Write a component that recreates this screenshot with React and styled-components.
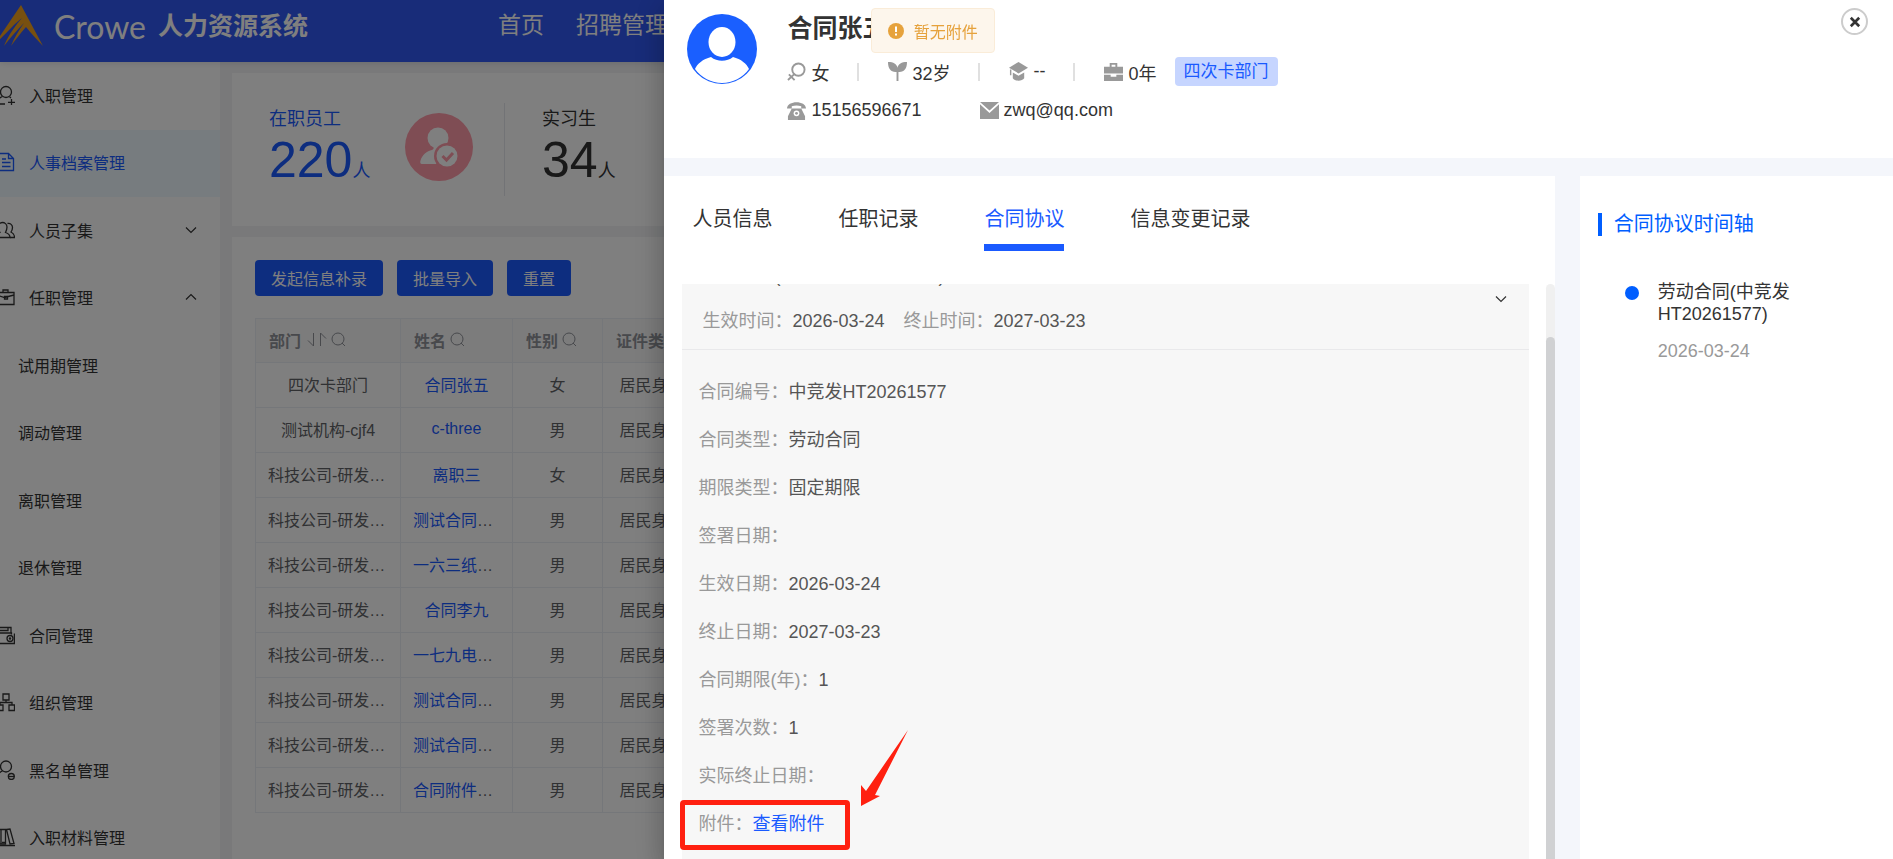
import React, { useState } from "react"
import styled, { createGlobalStyle } from "styled-components"

const menus = [
  { name: "入职管理", icon: "userAdd" },
  { name: "人事档案管理", icon: "file", active: true },
  { name: "人员子集", icon: "users", arrow: "down" },
  { name: "任职管理", icon: "bag", arrow: "up" },
  { name: "试用期管理", sub: true },
  { name: "调动管理", sub: true },
  { name: "离职管理", sub: true },
  { name: "退休管理", sub: true },
  { name: "合同管理", icon: "wallet" },
  { name: "组织管理", icon: "org" },
  { name: "黑名单管理", icon: "userBan" },
  { name: "入职材料管理", icon: "books" }
]

const employees = [
  ["四次卡部门", "合同张五", "女"],
  ["测试机构-cjf4", "c-three", "男"],
  ["科技公司-研发中心", "离职三", "女"],
  ["科技公司-研发中心", "测试合同人员", "男"],
  ["科技公司-研发中心", "一六三纸质合同", "男"],
  ["科技公司-研发中心", "合同李九", "男"],
  ["科技公司-研发中心", "一七九电子合同", "男"],
  ["科技公司-研发中心", "测试合同人员", "男"],
  ["科技公司-研发中心", "测试合同人员", "男"],
  ["科技公司-研发中心", "合同附件人员", "男"]
]

const details = [
  ["合同编号", "中竞发HT20261577"],
  ["合同类型", "劳动合同"],
  ["期限类型", "固定期限"],
  ["签署日期", ""],
  ["生效日期", "2026-03-24"],
  ["终止日期", "2027-03-23"],
  ["合同期限(年)", "1"],
  ["签署次数", "1"],
  ["实际终止日期", ""]
]

const tabs = ["人员信息", "任职记录", "合同协议", "信息变更记录"]

const menuPaths = {
  userAdd: (
    <>
      <circle cx="11" cy="7" r="5.5" />
      <path d="M7.5 11.5C4 13 2 15.500 2 19H10M14.500 11.800L16 13M13 17.300h7M16.500 14v6.500" />
    </>
  ),
  file: (
    <>
      <path d="M4 1.500h9.500L18.500 6.500V18.500H4zM13.500 1.500V6.500h5" />
      <path d="M7 7h4M7 10.500h8.500M7 14.500h8.500" />
    </>
  ),
  users: (
    <>
      <path d="M1 17.500c0-3 1.500-4 4-5C4 10.500 3.500 9 3.500 7c0-3 2-4.500 4-4.500s4.500 1.500 4.500 4.500c0 2-.5 3.500-1.500 5.500 3 1 4.500 2 4.500 5z" />
      <path d="M12.500 3.500c3-.5 5 1.500 5 4 0 2-.5 3-1.500 4.500 2 1 3.500 2.500 3.500 5.500H15" />
    </>
  ),
  bag: (
    <>
      <path d="M1 5.500h18v12H1zM8 5V3h5v2M1 8l8.500 2.500L19 8" />
      <path d="M9.500 9.500h3v2.500h-3z" />
    </>
  ),
  wallet: (
    <>
      <path d="M1 2.500h15v5M1 5.500h12V2.500M1 8h15.500v1.500M19.400 8.500V18.500H1" />
      <circle cx="15" cy="13.500" r="3" />
      <circle cx="15" cy="13.500" r=".6" />
    </>
  ),
  org: (
    <>
      <path d="M8 2h6v6H8zM2 13h6v5.500H2zM14 13h5.500v5.500H14z" />
      <path d="M11 8v2.500M5 13v-2.500h12V13" />
    </>
  ),
  userBan: (
    <>
      <circle cx="11" cy="6.500" r="5.500" />
      <path d="M7.500 11C4 12.500 2 15 2 18.500" />
      <circle cx="16.300" cy="16.500" r="3" />
      <path d="M13.500 16.500h6" />
    </>
  ),
  books: (
    <>
      <path d="M1 2.500h5V17H1zM6 2.500h4.500V17H6zM11.500 2.500l3.500-.5 4 14.500-4 .500z" />
      <path d="M1 15.500h4M7 15.500h3M0 18.500h20" />
    </>
  )
}

const Chevron = ({ up }) => (
  <ChevronSvg viewBox="0 0 12 12" aria-hidden="true">
    <path d={up ? "M1 8.500L6 3.500L11 8.500" : "M1 3.500L6 8.500L11 3.500"} />
  </ChevronSvg>
)

const SearchIcon = () => (
  <SmallSvg viewBox="0 0 15 15" aria-hidden="true">
    <circle cx="7" cy="7" r="6" />
    <path d="M11 11L14 14" />
  </SmallSvg>
)

const Logo = () => (
  <LogoSvg viewBox="0 0 44 44" aria-hidden="true">
    <path d="M21 1L43 42C37 36 31 29 26 23C20 30 15 36 11 42C14 34 19 26 24 19C17 26 10 34 4 42C8 32 15 22 22 14C14 20 6 30-6 41z" />
  </LogoSvg>
)

const InfoIcon = ({ children }) => (
  <InfoSvg viewBox="0 0 20 20" aria-hidden="true">
    {children}
  </InfoSvg>
)

const SidebarMenu = () => (
  <Sidebar>
    {menus.map(item => (
      <MenuItem key={item.name} href="#" $active={item.active} $sub={item.sub}>
        {item.icon && (
          <MenuSvg viewBox="0 0 20 20" aria-hidden="true">
            {menuPaths[item.icon]}
          </MenuSvg>
        )}
        <MenuName>{item.name}</MenuName>
        {item.arrow && <Chevron up={item.arrow === "up"} />}
      </MenuItem>
    ))}
  </Sidebar>
)

const Statistics = () => (
  <StatCard>
    <Stat $active>
      <StatLabel>在职员工</StatLabel>
      <StatValue>
        220<StatUnit>人</StatUnit>
      </StatValue>
    </Stat>
    <StatSvg viewBox="0 0 68 68" aria-hidden="true">
      <circle cx="34" cy="34" r="34" fill="#ff9aa8" />
      <circle cx="33" cy="25" r="10.500" fill="#fff" />
      <path d="M29 32h8l2 6-8 13H17c-2 0-2-2-1.500-3.500C17 42 22 38 27 37c2-.5 2-3 2-5z" fill="#fff" />
      <circle cx="42" cy="43" r="13" fill="#ff9aa8" />
      <circle cx="42" cy="43" r="10.500" fill="#fff" />
      <path d="M37.500 43l4 4 6.500-7" fill="none" stroke="#ff9aa8" strokeWidth="3" />
    </StatSvg>
    <StatLine />
    <Stat>
      <StatLabel>实习生</StatLabel>
      <StatValue>
        34<StatUnit>人</StatUnit>
      </StatValue>
    </Stat>
  </StatCard>
)

const EmployeeList = () => (
  <ListCard>
    <Toolbar>
      <Button type="button">发起信息补录</Button>
      <Button type="button">批量导入</Button>
      <Button type="button">重置</Button>
    </Toolbar>
    <Table>
      <colgroup>
        <Col $width={145} />
        <Col $width={112} />
        <Col $width={90} />
        <Col $width={114} />
      </colgroup>
      <thead>
        <tr>
          <Th>
            <ThInner>
              部门
              <SortSvg viewBox="0 0 20 15" aria-hidden="true">
                <path d="M6.500 1v13L1 8.500M13.500 14V1L19 6.500" />
              </SortSvg>
              <SearchIcon />
            </ThInner>
          </Th>
          <Th>
            <ThInner>
              姓名
              <SearchIcon />
            </ThInner>
          </Th>
          <Th>
            <ThInner>
              性别
              <SearchIcon />
            </ThInner>
          </Th>
          <Th>
            <ThInner>证件类型</ThInner>
          </Th>
        </tr>
      </thead>
      <tbody>
        {employees.map(([dept, name, gender], i) => (
          <tr key={i}>
            <Td>{dept}</Td>
            <Td>
              <Link href="#">{name}</Link>
            </Td>
            <Td>{gender}</Td>
            <Td>居民身份证</Td>
          </tr>
        ))}
      </tbody>
    </Table>
  </ListCard>
)

const Profile = () => (
  <ProfileBox>
    <AvatarSvg viewBox="0 0 70 70" aria-hidden="true">
      <circle cx="35" cy="35" r="35" fill="#1a5fff" />
      <path d="M24 43C30 48 40 48 46 43C54 45 60 50 62 55A33 33 0 0 1 8 55C10 50 16 45 24 43z" fill="#fff" />
      <ellipse cx="35" cy="28" rx="13.500" ry="15" fill="#fff" />
    </AvatarSvg>
    <ProfileInfo>
      <ProfileName>合同张五</ProfileName>
      <InfoRow>
        <InfoItem>
          <InfoIcon>
            <circle cx="12" cy="8" r="6.500" fill="none" stroke="#999" strokeWidth="2" />
            <path d="M8 12.500L1 19M2 13l6 6" stroke="#999" strokeWidth="2" />
          </InfoIcon>
          女
        </InfoItem>
        <InfoLine />
        <InfoItem>
          <InfoIcon>
            <path d="M9 10.500C3 11 0 7 0 0c6 0 9 2 10 6 1-4 4-6 10-6 0 7-3 11-9 10.500V20H9z" />
          </InfoIcon>
          32岁
        </InfoItem>
        <InfoLine />
        <InfoItem>
          <InfoIcon>
            <path d="M10 0l10 6L10 12 0 6z" />
            <path d="M4 11l6 3.500 6-3.500v6c-2 3.500-10 3.500-12 0zM1 8h1.500v6H1z" />
          </InfoIcon>
          --
        </InfoItem>
        <InfoLine />
        <InfoItem>
          <InfoIcon>
            <path d="M6 5V1h8v4h6v7H0V5zM8 5h4V3H8zM0 13.500h7v2h6v-2h7V20H0z" />
          </InfoIcon>
          0年
        </InfoItem>
        <DeptTag>四次卡部门</DeptTag>
      </InfoRow>
      <InfoRow>
        <InfoItem>
          <InfoIcon>
            <path d="M0 8C0-1 20-1 20 8H15V5.500C12 4.500 8 4.500 5 5.500V8zM5 8h10l4 8v4H1v-4z" />
            <circle cx="10" cy="13" r="3" fill="#fff" />
            <circle cx="10" cy="13" r="1.500" />
          </InfoIcon>
          15156596671
        </InfoItem>
        <MailItem>
          <InfoIcon>
            <path d="M0 1h20L10 10zM0 3.500L10 12.500 20 3.500V19H0z" />
          </InfoIcon>
          zwq@qq.com
        </MailItem>
      </InfoRow>
    </ProfileInfo>
    <CloseButton type="button" aria-label="关闭">
      <svg width="12" height="12" viewBox="0 0 10 10">
        <path d="M1.500 1.500l7 7M8.500 1.500l-7 7" stroke="#333" strokeWidth="2.200" />
      </svg>
    </CloseButton>
  </ProfileBox>
)

const Contract = () => (
  <ContractCard>
    <ContractHead>
      <div>
        <ContractLine>劳动合同(中竞发HT20261577)</ContractLine>
        <ContractLine>
          <Period>
            <Label>生效时间：</Label>2026-03-24
          </Period>
          <Period>
            <Label>终止时间：</Label>2027-03-23
          </Period>
        </ContractLine>
      </div>
      <Chevron />
    </ContractHead>
    <ContractBody>
      {details.map(([label, value]) => (
        <DetailRow key={label}>
          <Label>{label}：</Label>
          {value}
        </DetailRow>
      ))}
      <DetailRow>
        <Label>附件：</Label>
        <Link href="#">查看附件</Link>
        <MarkBox />
        <MarkArrow viewBox="0 0 48 76" aria-hidden="true">
          <path d="M47 0L14 65 19 66 0 76V55L5 61z" />
        </MarkArrow>
      </DetailRow>
    </ContractBody>
  </ContractCard>
)

const App = () => {
  const [current, setCurrent] = useState("合同协议")

  return (
    <>
      <GlobalStyle />
      <Page>
        <Header>
          <Logo />
          <Brand>Crowe</Brand>
          <SystemName>人力资源系统</SystemName>
          <Nav>
            <NavLink href="#">首页</NavLink>
            <NavLink href="#">招聘管理</NavLink>
          </Nav>
        </Header>
        <Body>
          <SidebarMenu />
          <Main>
            <Statistics />
            <EmployeeList />
          </Main>
        </Body>
      </Page>
      <Mask>
        <Drawer>
          <Profile />
          <DrawerBody>
            <LeftPanel>
              <TabBar>
                {tabs.map(tab => (
                  <Tab
                    key={tab}
                    type="button"
                    $active={tab === current}
                    onClick={() => setCurrent(tab)}
                  >
                    {tab}
                  </Tab>
                ))}
              </TabBar>
              <ScrollArea>
                <Contract />
                <ScrollTrack>
                  <ScrollThumb />
                </ScrollTrack>
              </ScrollArea>
            </LeftPanel>
            <RightPanel>
              <TimelineTitle>合同协议时间轴</TimelineTitle>
              <TimelineItem>
                <TimelineDot />
                <div>
                  <TimelineName>劳动合同(中竞发HT20261577)</TimelineName>
                  <TimelineDate>2026-03-24</TimelineDate>
                </div>
              </TimelineItem>
            </RightPanel>
          </DrawerBody>
        </Drawer>
      </Mask>
      <Message role="alert">
        <svg width="16" height="16" viewBox="0 0 16 16" aria-hidden="true">
          <circle cx="8" cy="8" r="8" fill="#e6a23c" />
          <path d="M8 3.500v5.500M8 10.500v2" stroke="#fff" strokeWidth="2" />
        </svg>
        暂无附件
      </Message>
    </>
  )
}

export default App

const GlobalStyle = createGlobalStyle`
  * {
    box-sizing: border-box;
  }
  body {
    margin: 0;
    overflow: hidden;
    font-family: "Liberation Sans", "Noto Sans CJK SC", sans-serif;
    font-size: 16px;
    color: #333;
  }
  button {
    font-family: inherit;
    border: none;
    cursor: pointer;
  }
  a {
    text-decoration: none;
  }
`
const Page = styled.div`
  display: flex;
  flex-direction: column;
  height: 100vh;
  overflow: hidden;
  background: #f2f3f5;
`
const Header = styled.header`
  display: flex;
  flex: none;
  align-items: center;
  height: 62px;
  padding-bottom: 10px;
  background: #3058f2;
  color: #fff;
  box-shadow: 0 1px 6px rgba(0, 21, 41, 0.12);
  z-index: 1;
`
const LogoSvg = styled.svg`
  width: 44px;
  height: 44px;
  fill: #f0a01e;
`
const Brand = styled.span`
  margin-left: 10px;
  font-family: Lato, sans-serif;
  font-size: 32px;
`
const SystemName = styled.h1`
  margin: 0 0 4px 12px;
  font-size: 25px;
  font-weight: bold;
`
const Nav = styled.nav`
  display: flex;
  gap: 32px;
  margin: 0 0 6px 190px;
`
const NavLink = styled.a`
  color: #fff;
  font-size: 23px;
`
const Body = styled.div`
  display: flex;
  flex: 1;
  min-height: 0;
`
const Sidebar = styled.nav`
  display: grid;
  flex: none;
  grid-template-rows: repeat(12, 1fr);
  width: 220px;
  height: 810px;
  background: #fff;
`
const MenuItem = styled.a`
  display: flex;
  align-items: center;
  padding: 0 23px 2px ${props => (props.$sub ? "18px" : "0")};
  color: ${props => (props.$active ? "#1a5aff" : "#333")};
  background: ${props => (props.$active ? "#eef8ff" : "#fff")};
`
const MenuSvg = styled.svg`
  flex: none;
  width: 20px;
  height: 20px;
  margin: 0 14px 0 -5px;
  fill: none;
  stroke: currentColor;
  stroke-width: 1.3;
`
const MenuName = styled.span`
  flex: 1;
`
const ChevronSvg = styled.svg`
  flex: none;
  width: 12px;
  height: 12px;
  fill: none;
  stroke: #333;
  stroke-width: 1.2;
`
const Main = styled.main`
  display: flex;
  flex: 1;
  flex-direction: column;
  gap: 11px;
  padding: 11px 0 0 12px;
  min-width: 0;
`
const StatCard = styled.section`
  display: flex;
  align-items: center;
  height: 153px;
  padding-left: 37px;
  background: #fff;
`
const Stat = styled.div`
  min-width: 136px;
  padding-top: 7px;
  color: ${props => (props.$active ? "#1a5aff" : "#333")};
`
const StatLabel = styled.div`
  font-size: 18px;
  line-height: 24px;
`
const StatValue = styled.div`
  font-size: 50px;
  line-height: 58px;
`
const StatUnit = styled.span`
  font-size: 18px;
`
const StatSvg = styled.svg`
  width: 68px;
  height: 68px;
  margin-bottom: 5px;
`
const StatLine = styled.div`
  width: 1px;
  height: 93px;
  margin: 0 37px 0 31px;
  background: #e4e7ed;
`
const ListCard = styled.section`
  flex: 1;
  padding: 23px;
  background: #fff;
`
const Toolbar = styled.div`
  display: flex;
  gap: 14px;
  margin-bottom: 22px;
`
const Button = styled.button`
  height: 36px;
  padding: 0 16px;
  border-radius: 4px;
  background: #1a5aff;
  color: #fff;
  font-size: 16px;
`
const Table = styled.table`
  width: 461px;
  table-layout: fixed;
  border-collapse: collapse;
  color: #606266;
`
const Col = styled.col`
  width: ${props => props.$width}px;
`
const Th = styled.th`
  height: 44px;
  padding: 0 0 2px 13px;
  border: 1px solid #ebeef5;
  background: #f8f8f9;
  color: #909399;
`
const ThInner = styled.div`
  display: flex;
  align-items: center;
  gap: 4px;
  white-space: nowrap;
`
const Td = styled.td`
  height: 45px;
  padding: 0 12px 2px;
  border: 1px solid #ebeef5;
  overflow: hidden;
  text-align: center;
  text-overflow: ellipsis;
  white-space: nowrap;
`
const SmallSvg = styled.svg`
  width: 15px;
  height: 15px;
  fill: none;
  stroke: #909399;
`
const SortSvg = styled(SmallSvg)`
  width: 20px;
  margin-left: 2px;
`
const Link = styled.a`
  color: #1a5aff;
`
const Mask = styled.div`
  position: fixed;
  inset: 0;
  z-index: 10;
  display: flex;
  justify-content: flex-end;
  background: rgba(0, 0, 0, 0.5);
`
const Drawer = styled.aside`
  display: flex;
  flex-direction: column;
  width: 64.9%;
  background: #f4f6fb;
  box-shadow: 0 8px 10px -5px rgba(0, 0, 0, 0.2),
    0 16px 24px 2px rgba(0, 0, 0, 0.14), 0 6px 30px 5px rgba(0, 0, 0, 0.12);
`
const ProfileBox = styled.header`
  display: flex;
  height: 158px;
  padding: 8px 25px 0 23px;
  background: #fff;
`
const AvatarSvg = styled.svg`
  flex: none;
  width: 70px;
  height: 70px;
  margin: 6px 30px 0 0;
`
const ProfileInfo = styled.div`
  flex: 1;
`
const ProfileName = styled.h2`
  margin: 0 0 8px;
  font-size: 25px;
  line-height: 40px;
`
const InfoRow = styled.div`
  display: flex;
  align-items: center;
  height: 31px;
  margin-bottom: 8px;
  font-size: 18px;
`
const InfoItem = styled.span`
  display: flex;
  align-items: center;
  gap: 5px;
`
const MailItem = styled(InfoItem)`
  margin-left: 58px;
`
const InfoSvg = styled.svg`
  width: 19px;
  height: 19px;
  fill: #999;
`
const InfoLine = styled.i`
  width: 2px;
  height: 18px;
  margin: 0 29px 0 28px;
  background: #e0e0e0;
`
const DeptTag = styled.span`
  margin-left: 18px;
  padding: 0 9px;
  border-radius: 4px;
  background: #c6d5ff;
  color: #1a5aff;
  font-size: 17px;
  line-height: 29px;
`
const CloseButton = styled.button`
  display: flex;
  align-items: center;
  justify-content: center;
  width: 27px;
  height: 27px;
  padding: 0;
  border: 2px solid #ccc;
  border-radius: 50%;
  background: #fff;
`
const DrawerBody = styled.div`
  display: flex;
  flex: 1;
  justify-content: space-between;
  min-height: 0;
  padding-top: 18px;
`
const LeftPanel = styled.section`
  display: flex;
  flex-direction: column;
  width: 72.5%;
  background: #fff;
`
const TabBar = styled.div`
  display: flex;
  gap: 66px;
  padding: 18px 28px 33px;
`
const Tab = styled.button`
  height: 57px;
  padding: 0 0 4px;
  border-bottom: 7px solid ${props => (props.$active ? "#1a5aff" : "transparent")};
  background: none;
  color: ${props => (props.$active ? "#1a5aff" : "#333")};
  font-size: 20px;
`
const ScrollArea = styled.div`
  display: flex;
  flex: 1;
  min-height: 0;
  padding-left: 18px;
  overflow: hidden;
`
/* the panel is scrolled a little past the contract title */
const ContractCard = styled.article`
  flex: 1;
  height: max-content;
  margin: -37px 17px 0 0;
  background: #f7f7f7;
  color: #555;
  font-size: 18px;
`
const ContractHead = styled.div`
  display: flex;
  align-items: center;
  justify-content: space-between;
  padding: 7px 22px 5px 20px;
  border-bottom: 1px solid #e9e9eb;
`
const ContractLine = styled.div`
  display: flex;
  gap: 19px;
  line-height: 45px;
`
const Period = styled.span`
  white-space: nowrap;
`
const Label = styled.span`
  color: #999;
`
const ContractBody = styled.div`
  padding: 18px 16px;
`
const DetailRow = styled.div`
  position: relative;
  line-height: 48px;
`
const MarkBox = styled.i`
  position: absolute;
  top: 0;
  left: -18px;
  width: 170px;
  height: 50px;
  border: 5px solid #ff2010;
  border-radius: 4px;
  pointer-events: none;
`
const MarkArrow = styled.svg`
  position: absolute;
  top: -70px;
  left: 163px;
  width: 48px;
  height: 76px;
  fill: #ff2010;
`
const ScrollTrack = styled.div`
  width: 9px;
  padding-top: 53px;
  border-radius: 5px 5px 0 0;
  background: #f0f0f0;
`
const ScrollThumb = styled.div`
  height: 100%;
  border-radius: 5px 5px 0 0;
  background: #d0d1d3;
`
const RightPanel = styled.section`
  width: 25.5%;
  padding: 37px 18px;
  background: #fff;
`
const TimelineTitle = styled.h3`
  margin: 0 0 45px;
  padding-left: 12px;
  border-left: 4px solid #005eff;
  color: #005eff;
  font-size: 20px;
  font-weight: normal;
  line-height: 23px;
`
const TimelineItem = styled.div`
  display: flex;
  gap: 19px;
  padding-left: 27px;
  font-size: 18px;
  line-height: 22px;
`
const TimelineDot = styled.i`
  flex: none;
  width: 14px;
  height: 14px;
  margin-top: 5px;
  border-radius: 50%;
  background: #005eff;
`
const TimelineName = styled.div`
  margin-bottom: 15px;
`
const TimelineDate = styled.div`
  color: #999;
`
const Message = styled.div`
  position: fixed;
  top: 8px;
  left: 46%;
  z-index: 20;
  display: flex;
  align-items: center;
  gap: 10px;
  height: 45px;
  padding: 0 16px;
  border: 1px solid #faecd8;
  border-radius: 4px;
  background: #fdf6ec;
  color: #e6a23c;
`
